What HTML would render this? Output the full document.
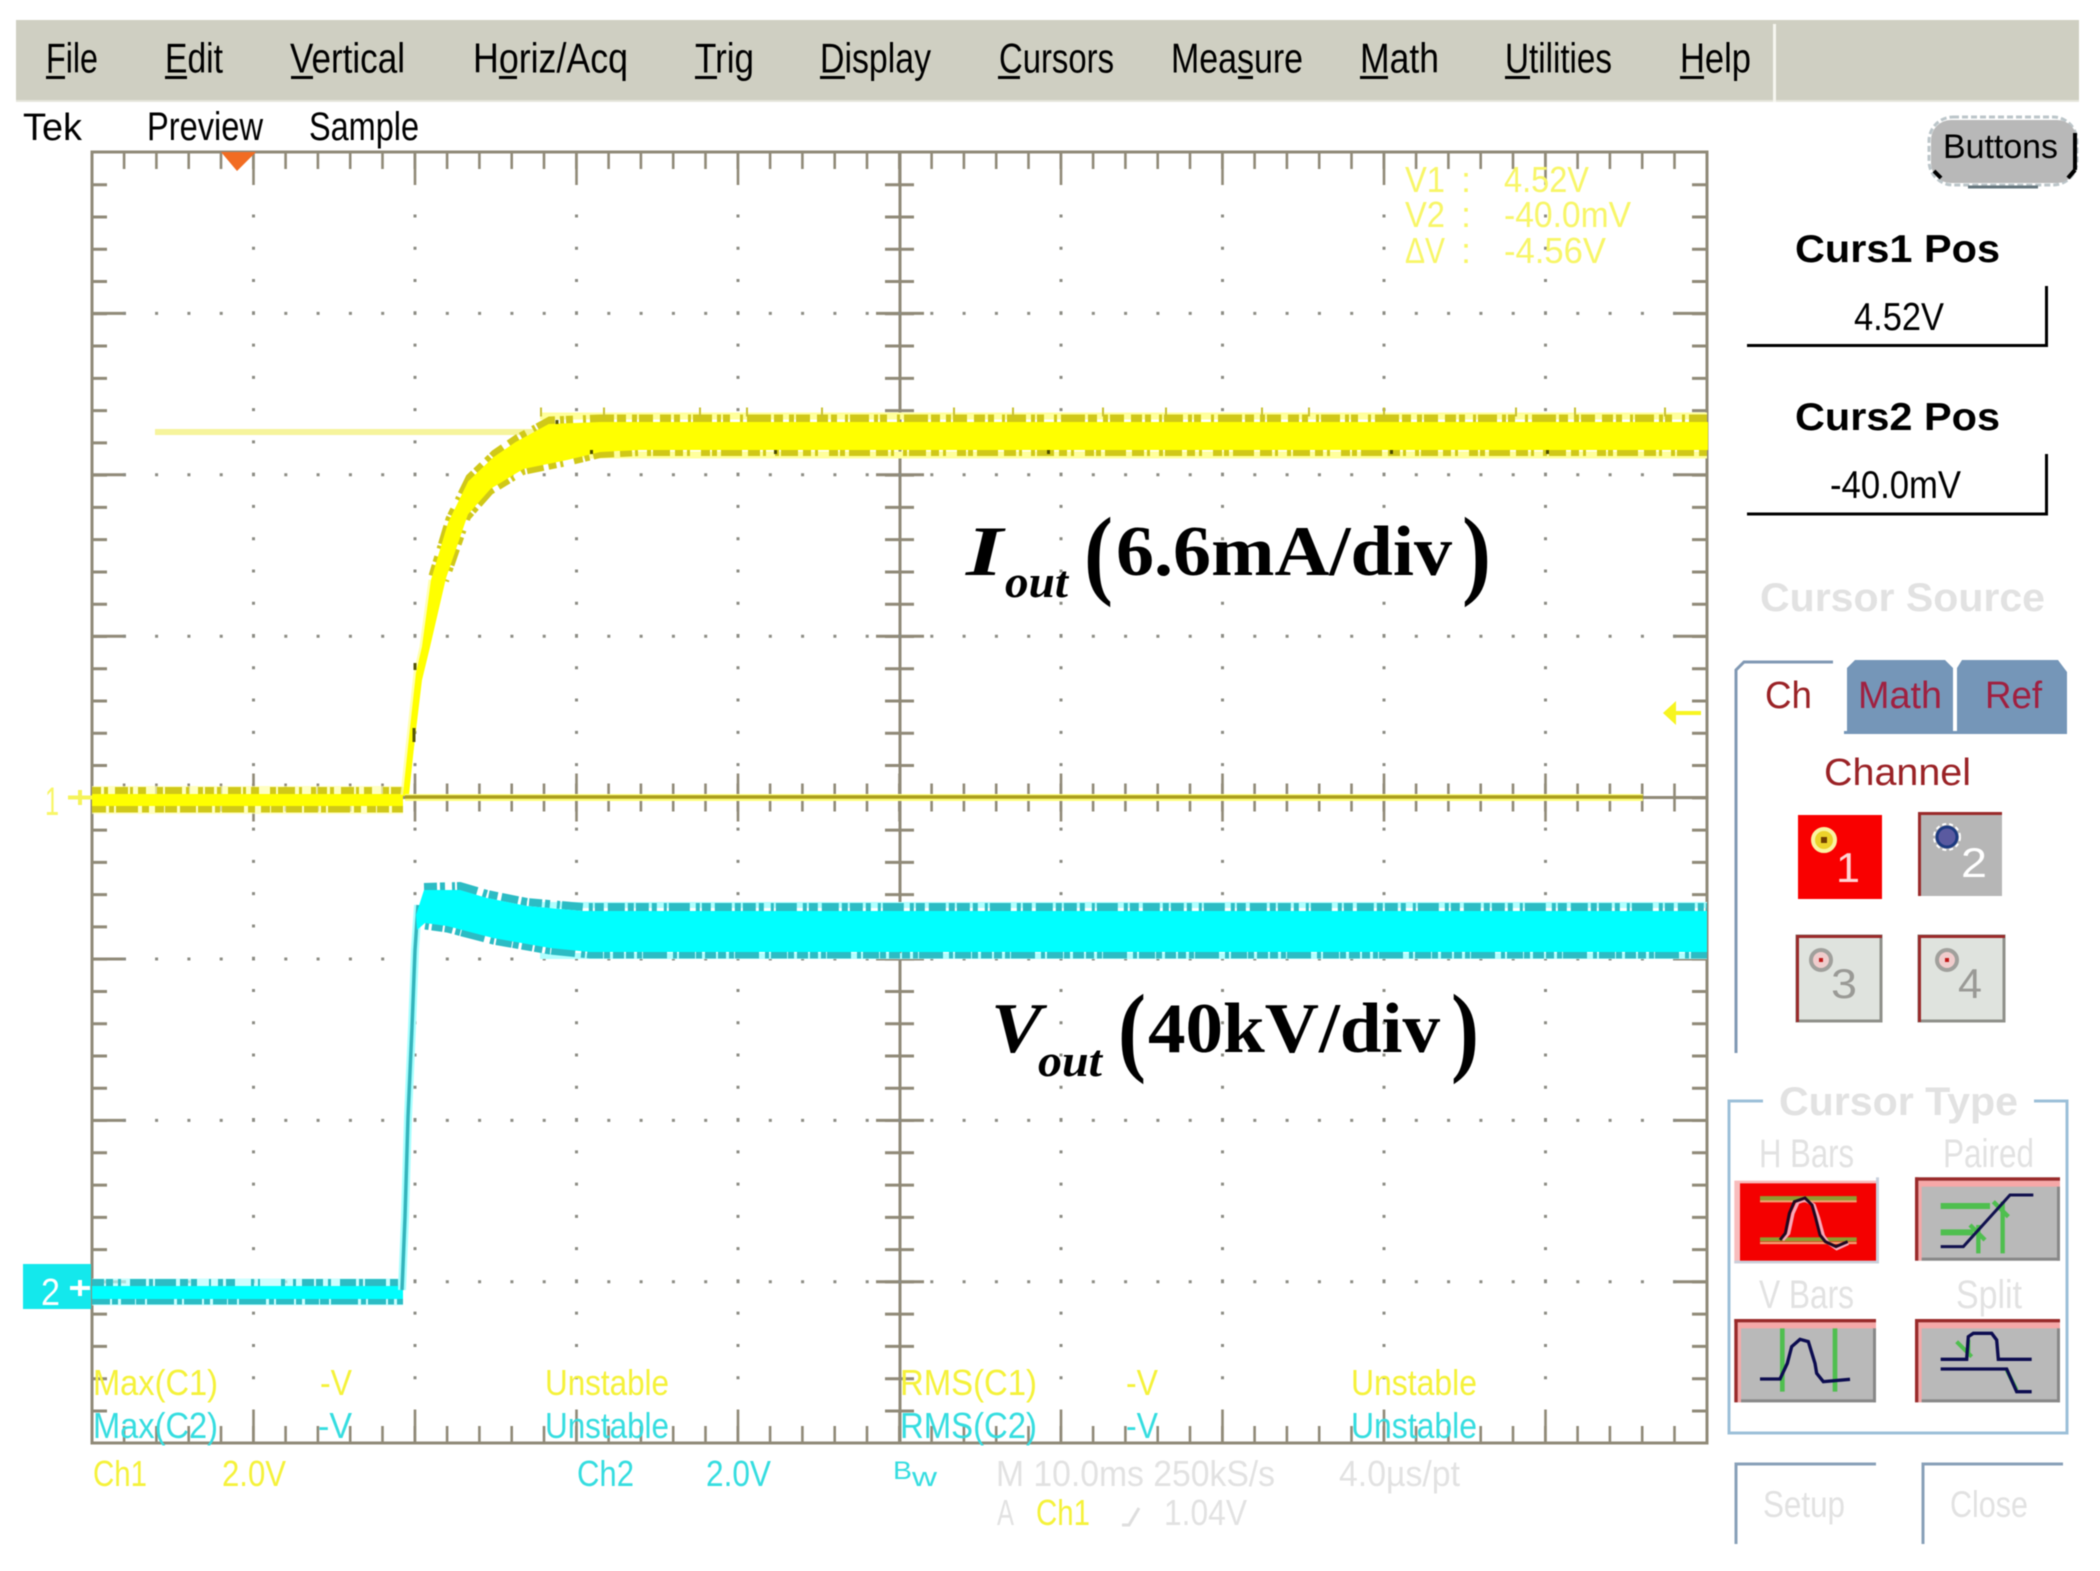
<!DOCTYPE html>
<html><head><meta charset="utf-8"><style>
html,body{margin:0;padding:0;background:#fff;width:2100px;height:1571px;overflow:hidden}
svg{display:block;filter:blur(.6px)}
text{font-family:"Liberation Sans",sans-serif}
.s{font-family:"Liberation Serif",serif;font-weight:bold;fill:#000}
.y{fill:#f5f23a}.c{fill:#35dde0}.g{fill:#e2e2e2}.p{fill:#f8f668}.r{fill:#9a2226}
.b{font-weight:bold}
</style></head><body>
<svg width="2100" height="1571" viewBox="0 0 2100 1571" xmlns="http://www.w3.org/2000/svg">
<rect width="2100" height="1571" fill="#fff"/>
<!-- header -->
<rect x="16" y="20" width="2063" height="82" fill="#cfcfc2"/>
<rect x="16" y="100" width="2063" height="2" fill="#e6e6dc"/>
<rect x="1773" y="24" width="3" height="78" fill="#f6f6f0"/>
<g font-size="42" fill="#000">
<text x="46" y="72.5" textLength="52" lengthAdjust="spacingAndGlyphs">File</text>
<text x="165" y="72.5" textLength="58" lengthAdjust="spacingAndGlyphs">Edit</text>
<text x="290" y="72.5" textLength="115" lengthAdjust="spacingAndGlyphs">Vertical</text>
<text x="473" y="72.5" textLength="155" lengthAdjust="spacingAndGlyphs">Horiz/Acq</text>
<text x="695" y="72.5" textLength="59" lengthAdjust="spacingAndGlyphs">Trig</text>
<text x="820" y="72.5" textLength="111" lengthAdjust="spacingAndGlyphs">Display</text>
<text x="999" y="72.5" textLength="115" lengthAdjust="spacingAndGlyphs">Cursors</text>
<text x="1171" y="72.5" textLength="132" lengthAdjust="spacingAndGlyphs">Measure</text>
<text x="1360" y="72.5" textLength="79" lengthAdjust="spacingAndGlyphs">Math</text>
<text x="1505" y="72.5" textLength="107" lengthAdjust="spacingAndGlyphs">Utilities</text>
<text x="1680" y="72.5" textLength="71" lengthAdjust="spacingAndGlyphs">Help</text>
</g>
<g fill="#000">
<rect x="46" y="76" width="19" height="3"/><rect x="165" y="76" width="22" height="3"/><rect x="291" y="76" width="22" height="3"/><rect x="499" y="76" width="18" height="3"/><rect x="695" y="76" width="22" height="3"/><rect x="820" y="76" width="25" height="3"/><rect x="998" y="76" width="22" height="3"/><rect x="1238" y="76" width="15" height="3"/><rect x="1360" y="76" width="28" height="3"/><rect x="1505" y="76" width="25" height="3"/><rect x="1680" y="76" width="24" height="3"/>
</g>
<text x="23" y="140" font-size="38" textLength="59" lengthAdjust="spacingAndGlyphs">Tek</text>
<text x="147" y="140" font-size="40" textLength="116" lengthAdjust="spacingAndGlyphs">Preview</text>
<text x="309" y="140" font-size="40" textLength="110" lengthAdjust="spacingAndGlyphs">Sample</text>

<!-- grid -->
<g fill="none" stroke="#908a78">
<rect x="92" y="152" width="1615" height="1291" stroke-width="3"/>
<path d="M900 152V1443M92 797.5H1707" stroke-width="3"/>
<path d="M122.8 160.5H1707M122.8 1434.5H1707" stroke-width="17" stroke-dasharray="2.6 29.7"/>
<path d="M252.2 168.5H1600M252.2 1426H1600" stroke-width="33" stroke-dasharray="2.6 158.9"/>
<path d="M99.5 183.2V1443M1699.5 183.2V1443" stroke-width="15" stroke-dasharray="3 29.27"/>
<path d="M109 311.9V1300M1690 311.9V1300" stroke-width="34" stroke-dasharray="3 158.4"/>
<path d="M899.5 183.2V1443" stroke-width="29" stroke-dasharray="3 29.27"/>
<path d="M900 311.9V1300" stroke-width="48" stroke-dasharray="3 158.4"/>
<path d="M122.8 797.5H1707" stroke-width="28" stroke-dasharray="2.6 29.7"/>
<path d="M252.2 797.5H1600" stroke-width="48" stroke-dasharray="2.6 158.9"/>
</g>
<g fill="none" stroke="#8c8c84" stroke-width="3">
<path d="M122.8 313.4H1680M122.8 474.8H1680M122.8 636.2H1680M122.8 959H1680M122.8 1120.4H1680M122.8 1281.8H1680" stroke-dasharray="3 29.3"/>
</g>
<g fill="none" stroke="#8c8c84" stroke-width="3">
<path d="M253.5 214.5V1400M415 214.5V1400M576.5 214.5V1400M738 214.5V1400M1061 214.5V1400M1222.5 214.5V1400M1384 214.5V1400M1545.5 214.5V1400" stroke-dasharray="3 29.27"/>
</g>
<polygon points="221,152 256,152 237,171" fill="#f26c22"/>

<!-- cursor readout -->
<g font-size="36" class="p">
<text x="1405" y="192" textLength="40" lengthAdjust="spacingAndGlyphs">V1</text><text x="1461" y="192">:</text><text x="1504" y="192" textLength="85" lengthAdjust="spacingAndGlyphs">4.52V</text>
<text x="1405" y="227" textLength="40" lengthAdjust="spacingAndGlyphs">V2</text><text x="1461" y="227">:</text><text x="1504" y="227" textLength="127" lengthAdjust="spacingAndGlyphs">-40.0mV</text>
<text x="1405" y="263" textLength="40" lengthAdjust="spacingAndGlyphs">ΔV</text><text x="1461" y="263">:</text><text x="1504" y="263" textLength="102" lengthAdjust="spacingAndGlyphs">-4.56V</text>
</g>

<!-- yellow trace -->
<path d="M155 432H545" stroke="#f6f49c" stroke-width="6" fill="none"/>
<path d="M92 800H403" stroke="#ffffa8" stroke-width="28" fill="none" opacity=".7"/>
<path d="M92 791.5H403" stroke="#d0c818" stroke-width="9" fill="none" stroke-dasharray="9 3 4 7 13 2 3 5 8 11 6 2 17 4 3 9 5 2"/>
<path d="M92 808H403" stroke="#d0c818" stroke-width="9" fill="none" stroke-dasharray="14 3 5 2 22 4 7 6 9 1 12 3 16 2"/>
<rect x="92" y="794" width="311" height="12" fill="#ff0"/>
<!-- band glow + noise under core -->
<path d="M540 416H1707M540 455H1707" stroke="#ffff9c" stroke-width="7" fill="none"/>
<path d="M433 576L450 519 470 478 495 454 517 439 550 421 600 419H1707" stroke="#d0c818" stroke-width="9" fill="none" stroke-dasharray="11 3 6 8 3 2 19 5 4 2 7 10 3 4 24 3 9 6 5 2 14 7"/>
<path d="M1707 452H640L600 454 567 462 523 471 490 491 467 517 445 581" stroke="#d0c818" stroke-width="8" fill="none" stroke-dasharray="8 5 17 2 4 9 3 3 12 6 21 4 5 2 9 11 3 4"/>
<path d="M540 412H1707" stroke="#c8c030" stroke-width="9" fill="none" stroke-dasharray="2 61 2 94 2 45 2 73 2 130 2 57 2 88"/>
<!-- core -->
<path d="M404 795L409 747 417 673 423 647 432 580 449 523 469 482 494 458 516 443 549 425 600 423H1707V449H640L600 451 567 459 523 468 490 488 467 514 445 578 429 647 421 680 413 747 406 795Z" fill="#ff0" stroke="#ff0" stroke-width="2"/>
<path d="M404 795L409 747 417 673 423 647 432 580" stroke="#ffffa0" stroke-width="7" fill="none" opacity=".8"/>
<path d="M406 795L411 747 419 673 425 647 434 580" stroke="#ff0" stroke-width="6" fill="none"/>
<path d="M590 452H1707" stroke="#4a4a00" stroke-width="4" fill="none" stroke-dasharray="3 181 3 270 3 340 3 153 3 210"/>
<path d="M415 670V663M414 742V728M557 424V420" stroke="#55550a" stroke-width="3" fill="none"/>
<path d="M405 797.5H1643" stroke="#ffff80" stroke-width="7" fill="none"/>
<path d="M405 797H1643" stroke="#aa9d1e" stroke-width="3.5" fill="none"/>
<path d="M1675 713H1701" stroke="#f7f520" stroke-width="4" fill="none"/>
<polygon points="1663,713 1676,701 1676,725" fill="#f7f520"/>
<text x="45" y="815" font-size="40" class="p" textLength="14" lengthAdjust="spacingAndGlyphs">1</text>
<path d="M68 797.5H92M80 790V805" stroke="#f5f35a" stroke-width="4" fill="none"/>

<!-- cyan trace -->
<rect x="23" y="1264" width="68" height="45" fill="#14e8ec"/>
<text x="41" y="1305" font-size="38" fill="#fff" textLength="19" lengthAdjust="spacingAndGlyphs">2</text>
<path d="M70 1288H90M80 1280V1296" stroke="#fff" stroke-width="4" fill="none"/>
<path d="M92 1292H403" stroke="#b8ffff" stroke-width="27" fill="none" opacity=".7"/>
<path d="M92 1283H403" stroke="#2cbcc4" stroke-width="8" fill="none" stroke-dasharray="12 2 7 5 3 9 16 3 4 2 21 4 8 3 6"/>
<path d="M92 1301H403" stroke="#2cbcc4" stroke-width="7" fill="none" stroke-dasharray="18 2 6 3 14 1 9 2 27 3 5 2"/>
<rect x="92" y="1286" width="311" height="13" fill="#0ff"/>
<path d="M402 1290L405 1217 408 1117 412 1027 415 950 418 905" stroke="#a8ffff" stroke-width="8" fill="none"/>
<path d="M402 1290L405 1217 408 1117 412 1027 415 950 418 905" stroke="#34b4bc" stroke-width="3.5" fill="none"/>
<path d="M540 905H1707M540 956H1707" stroke="#b0ffff" stroke-width="6" fill="none"/>
<path d="M424 887L460 886 487 894 527 902 583 907H1707" stroke="#2cbcc4" stroke-width="8" fill="none" stroke-dasharray="13 3 5 7 3 2 21 6 4 2 9 4 17 3 6 2"/>
<path d="M1707 955H590L550 951 493 941 447 929 425 926" stroke="#2cbcc4" stroke-width="7" fill="none" stroke-dasharray="16 2 4 6 24 1 5 3 8 2 11 3 6 1"/>
<path d="M416 915L424 890 460 890 487 898 527 906 583 911H1707V952H590L550 948 493 938 447 926 425 923 417 930Z" fill="#0ff"/>

<!-- labels on scope -->
<text class="s" x="966" y="575" font-size="71" font-style="italic" textLength="37" lengthAdjust="spacingAndGlyphs">I</text>
<text class="s" x="1005" y="597" font-size="46" font-style="italic" textLength="63" lengthAdjust="spacingAndGlyphs">out</text>
<text class="s" x="1084" y="586" font-size="100" textLength="29" lengthAdjust="spacingAndGlyphs">(</text>
<text class="s" x="1116" y="575" font-size="71" textLength="336" lengthAdjust="spacingAndGlyphs">6.6mA/div</text>
<text class="s" x="1462" y="586" font-size="100" textLength="29" lengthAdjust="spacingAndGlyphs">)</text>

<text class="s" x="991" y="1052" font-size="71" font-style="italic" textLength="51" lengthAdjust="spacingAndGlyphs">V</text>
<text class="s" x="1038" y="1076" font-size="46" font-style="italic" textLength="64" lengthAdjust="spacingAndGlyphs">out</text>
<text class="s" x="1118" y="1063" font-size="100" textLength="28" lengthAdjust="spacingAndGlyphs">(</text>
<text class="s" x="1148" y="1052" font-size="71" textLength="292" lengthAdjust="spacingAndGlyphs">40kV/div</text>
<text class="s" x="1451" y="1063" font-size="100" textLength="28" lengthAdjust="spacingAndGlyphs">)</text>

<!-- measurements -->
<g font-size="36">
<g class="y">
<text x="93" y="1395" textLength="125" lengthAdjust="spacingAndGlyphs">Max(C1)</text>
<text x="320" y="1395" textLength="32" lengthAdjust="spacingAndGlyphs">-V</text>
<text x="545" y="1395" textLength="124" lengthAdjust="spacingAndGlyphs">Unstable</text>
<text x="900" y="1395" textLength="137" lengthAdjust="spacingAndGlyphs">RMS(C1)</text>
<text x="1126" y="1395" textLength="32" lengthAdjust="spacingAndGlyphs">-V</text>
<text x="1351" y="1395" textLength="126" lengthAdjust="spacingAndGlyphs">Unstable</text>
<text x="93" y="1486" textLength="54" lengthAdjust="spacingAndGlyphs">Ch1</text>
<text x="222" y="1486" textLength="64" lengthAdjust="spacingAndGlyphs">2.0V</text>
<text x="1036" y="1525" textLength="54" lengthAdjust="spacingAndGlyphs">Ch1</text>
</g>
<g class="c">
<text x="93" y="1438" textLength="125" lengthAdjust="spacingAndGlyphs">Max(C2)</text>
<text x="318" y="1438" textLength="34" lengthAdjust="spacingAndGlyphs">-V</text>
<text x="545" y="1438" textLength="124" lengthAdjust="spacingAndGlyphs">Unstable</text>
<text x="900" y="1438" textLength="137" lengthAdjust="spacingAndGlyphs">RMS(C2)</text>
<text x="1126" y="1438" textLength="32" lengthAdjust="spacingAndGlyphs">-V</text>
<text x="1351" y="1438" textLength="126" lengthAdjust="spacingAndGlyphs">Unstable</text>
<text x="577" y="1486" textLength="57" lengthAdjust="spacingAndGlyphs">Ch2</text>
<text x="706" y="1486" textLength="65" lengthAdjust="spacingAndGlyphs">2.0V</text>
<text x="893" y="1479" font-size="25" textLength="19" lengthAdjust="spacingAndGlyphs">B</text>
<text x="912" y="1486" font-size="27" textLength="25" lengthAdjust="spacingAndGlyphs">w</text>
</g>
<g class="g">
<text x="996" y="1486" textLength="279" lengthAdjust="spacingAndGlyphs">M 10.0ms 250kS/s</text>
<text x="1339" y="1486" textLength="121" lengthAdjust="spacingAndGlyphs">4.0µs/pt</text>
<text x="997" y="1525" textLength="17" lengthAdjust="spacingAndGlyphs">A</text>
<text x="1164" y="1525" textLength="83" lengthAdjust="spacingAndGlyphs">1.04V</text>
</g>
</g>
<path d="M1122 1525H1129L1139 1508" stroke="#dedede" stroke-width="3" fill="none"/>

<!-- Buttons -->
<rect x="1929" y="117" width="148" height="68" rx="24" fill="none" stroke="#bcc6ca" stroke-width="3" stroke-dasharray="6 3"/>
<rect x="1931" y="120" width="146" height="63" rx="20" fill="#b8b8b8"/>
<path d="M2075 133V170M1934 171L1941 178M2075 170L2068 178" stroke="#000" stroke-width="4" fill="none"/>
<path d="M1968 187H2038" stroke="#66777e" stroke-width="3" fill="none"/>
<text x="1943" y="158" font-size="34" textLength="115" lengthAdjust="spacingAndGlyphs">Buttons</text>

<!-- Curs -->
<text class="b" x="1795" y="262" font-size="39" textLength="205" lengthAdjust="spacingAndGlyphs">Curs1 Pos</text>
<path d="M1747 345.5H2046.5V286" stroke="#000" stroke-width="3" fill="none"/>
<text x="1854" y="330" font-size="39" textLength="90" lengthAdjust="spacingAndGlyphs">4.52V</text>
<text class="b" x="1795" y="430" font-size="39" textLength="205" lengthAdjust="spacingAndGlyphs">Curs2 Pos</text>
<path d="M1747 514H2046.5V454" stroke="#000" stroke-width="3" fill="none"/>
<text x="1830" y="498" font-size="39" textLength="131" lengthAdjust="spacingAndGlyphs">-40.0mV</text>

<text class="b g" x="1760" y="611" font-size="40" textLength="285" lengthAdjust="spacingAndGlyphs">Cursor Source</text>

<!-- tabs -->
<path d="M1736 1053V670L1744 662H1833" stroke="#8199b4" stroke-width="3" fill="none"/>
<path d="M1847 734V668L1855 660H1945L1953 668V734Z" fill="#7596b8"/>
<path d="M1957 734V668L1962 660H2058L2067 672V734Z" fill="#7596b8"/>
<rect x="1844" y="731" width="223" height="3" fill="#7596b8"/>
<text class="r" x="1765" y="708" font-size="38" textLength="47" lengthAdjust="spacingAndGlyphs">Ch</text>
<text x="1858" y="708" font-size="38" fill="#a02040" textLength="84" lengthAdjust="spacingAndGlyphs">Math</text>
<text x="1985" y="708" font-size="38" fill="#a02040" textLength="57" lengthAdjust="spacingAndGlyphs">Ref</text>
<text class="r" x="1824" y="785" font-size="38" textLength="147" lengthAdjust="spacingAndGlyphs">Channel</text>

<!-- channel buttons -->
<rect x="1798" y="815" width="84" height="84" fill="#f90000"/>
<circle cx="1824" cy="840" r="11" fill="#ecd22a" stroke="#fbf3a0" stroke-width="4"/><rect x="1821" y="837" width="6" height="6" fill="#704000"/>
<text x="1836" y="882" font-size="42" fill="#ffd4d4" textLength="24" lengthAdjust="spacingAndGlyphs">1</text>

<rect x="1918" y="812" width="84" height="84" fill="#b6b6b6"/>
<path d="M1919.5 896V813.5H2002" stroke="#9a2a2a" stroke-width="3" fill="none"/>
<circle cx="1947" cy="837" r="10" fill="#5a5aa0" stroke="#1c3a80" stroke-width="3"/><circle cx="1947" cy="837" r="13" fill="none" stroke="#fff" stroke-width="2" stroke-dasharray="4 3"/>
<text x="1961" y="877" font-size="42" fill="#fff" textLength="26" lengthAdjust="spacingAndGlyphs">2</text>

<rect x="1797" y="936" width="84" height="85" fill="#dfe3de" stroke="#8f908a" stroke-width="3"/>
<path d="M1797.5 1022V936.5H1882" stroke="#9a2a2a" stroke-width="3" fill="none"/>
<circle cx="1821" cy="960" r="10" fill="#f0cccc" stroke="#a0a09c" stroke-width="4"/><rect x="1819" y="958" width="4" height="4" fill="#c01818"/>
<text x="1831" y="998" font-size="42" fill="#9a9a96" textLength="26" lengthAdjust="spacingAndGlyphs">3</text>

<rect x="1919" y="936" width="85" height="85" fill="#dfe3de" stroke="#8f908a" stroke-width="3"/>
<path d="M1919.5 1022V936.5H2005" stroke="#9a2a2a" stroke-width="3" fill="none"/>
<circle cx="1947" cy="960" r="10" fill="#f0cccc" stroke="#a0a09c" stroke-width="4"/><rect x="1945" y="958" width="4" height="4" fill="#c01818"/>
<text x="1958" y="998" font-size="42" fill="#9a9a96" textLength="24" lengthAdjust="spacingAndGlyphs">4</text>

<!-- cursor type -->
<path d="M1763 1101H1729V1433H2067V1101H2034" stroke="#9cc0d8" stroke-width="3" fill="none"/>
<text class="b g" x="1779" y="1115" font-size="40" textLength="239" lengthAdjust="spacingAndGlyphs">Cursor Type</text>
<g font-size="40" class="g">
<text x="1759" y="1167" textLength="95" lengthAdjust="spacingAndGlyphs">H Bars</text>
<text x="1943" y="1167" textLength="91" lengthAdjust="spacingAndGlyphs">Paired</text>
<text x="1759" y="1308" textLength="95" lengthAdjust="spacingAndGlyphs">V Bars</text>
<text x="1956" y="1308" textLength="66" lengthAdjust="spacingAndGlyphs">Split</text>
</g>
<g transform="translate(1700 1070) scale(.33333)" fill="none">
<!-- H Bars -->
<path d="M103 332H537V580H103" fill="#f8bcbc" stroke="none"/>
<rect x="528" y="322" width="9" height="258" fill="#c8d0dc"/>
<rect x="103" y="572" width="434" height="8" fill="#c8d0dc"/>
<rect x="120" y="340" width="408" height="232" fill="#f40000"/>
<path d="M180 385H470" stroke="#8f9c30" stroke-width="13"/>
<path d="M180 394H470" stroke="#f3a070" stroke-width="6"/>
<path d="M180 508H470" stroke="#8f9c30" stroke-width="12"/>
<path d="M180 519H470" stroke="#f3a070" stroke-width="7"/>
<path d="M248 510L266 490 279 430 294 397 315 390 342 405 356 445 370 497 384 518 410 536 445 520" stroke="#f8a8b8" stroke-width="10"/>
<path d="M240 510L256 490 268 430 283 395 315 384 336 405 346 440 360 495 376 515 408 530 443 515" stroke="#200820" stroke-width="9"/>
<!-- Paired -->
<rect x="645" y="322" width="435" height="250" fill="#b9b9b9"/>
<rect x="655" y="332" width="425" height="18" fill="#f6a8a8"/><rect x="655" y="332" width="10" height="240" fill="#f6a8a8"/>
<rect x="645" y="322" width="435" height="10" fill="#9a2a2a"/><rect x="645" y="322" width="10" height="250" fill="#9a2a2a"/>
<rect x="665" y="563" width="415" height="9" fill="#888"/><rect x="1071" y="350" width="9" height="222" fill="#888"/>
<path d="M722 408H870M722 487H820" stroke="#4fbf4f" stroke-width="18"/>
<path d="M908 395V550M835 465V550M880 395L925 440M810 465L855 510" stroke="#4fbf4f" stroke-width="13"/>
<path d="M722 530H790L930 375H1000" stroke="#10104e" stroke-width="9"/>
<!-- V Bars -->
<rect x="103" y="747" width="425" height="250" fill="#b9b9b9"/>
<rect x="113" y="757" width="415" height="18" fill="#f6a8a8"/><rect x="113" y="757" width="10" height="240" fill="#f6a8a8"/>
<rect x="103" y="747" width="425" height="10" fill="#9a2a2a"/><rect x="103" y="747" width="10" height="250" fill="#9a2a2a"/>
<rect x="123" y="988" width="405" height="9" fill="#888"/><rect x="519" y="775" width="9" height="222" fill="#888"/>
<path d="M247 775V965M405 775V965" stroke="#4fbf4f" stroke-width="14"/>
<path d="M180 927H240L262 880 275 830 300 808 325 815 345 880 350 910 370 935 450 928" stroke="#0c0c50" stroke-width="10"/>
<!-- Split -->
<rect x="645" y="747" width="435" height="250" fill="#b9b9b9"/>
<rect x="655" y="757" width="425" height="18" fill="#f6a8a8"/><rect x="655" y="757" width="10" height="240" fill="#f6a8a8"/>
<rect x="645" y="747" width="435" height="10" fill="#9a2a2a"/><rect x="645" y="747" width="10" height="250" fill="#9a2a2a"/>
<rect x="665" y="988" width="415" height="9" fill="#888"/><rect x="1071" y="775" width="9" height="222" fill="#888"/>
<path d="M770 815L815 860M805 810V860M920 900L950 960" stroke="#4fbf4f" stroke-width="12"/>
<path d="M722 868H800L805 800 820 790H875L890 810 895 868H995M722 897H920L950 965H995" stroke="#0c0c50" stroke-width="10"/>
</g>

<!-- Setup / Close -->
<path d="M1736 1544V1464H1876" stroke="#88a0b8" stroke-width="3" fill="none"/>
<path d="M1923 1544V1464H2063" stroke="#88a0b8" stroke-width="3" fill="none"/>
<text class="g" x="1763" y="1517" font-size="37" textLength="82" lengthAdjust="spacingAndGlyphs">Setup</text>
<text class="g" x="1950" y="1517" font-size="37" textLength="78" lengthAdjust="spacingAndGlyphs">Close</text>
</svg>
</body></html>
